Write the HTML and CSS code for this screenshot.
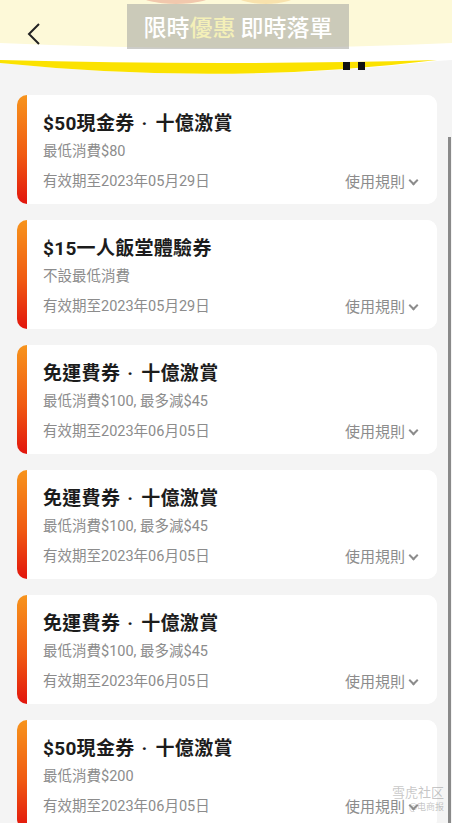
FILE: index.html
```html
<!DOCTYPE html>
<html lang="zh-Hant">
<head>
    <meta charset="UTF-8">
    <meta name="viewport" content="width=device-width, initial-scale=1.0">
    <title>限時優惠 即時落單</title>
    <link rel="stylesheet" href="styles.css">
</head>
<body>
    <div class="page">
        <header class="header">
            <div class="header-art">
                <span class="blob blob-red"></span>
                <span class="blob blob-orange"></span>
            </div>
            <svg class="header-wave" width="452" height="80" viewBox="0 0 452 80">
                <path d="M0 43 Q226 53 452 43 L452 80 L0 80 Z" fill="#ffffff"/>
                <path d="M0 63 Q226 86 437 61 L452 60 L452 80 L0 80 Z" fill="#f4f4f4"/>
                <path d="M0 60 Q226 66 437 60 Q226 86 0 63 Z" fill="#fbe200"/>
                <rect x="343" y="62" width="7" height="8" fill="#111"/>
                <rect x="358" y="62" width="7" height="8" fill="#111"/>
            </svg>
            <button class="back" aria-label="返回">
                <svg width="14" height="22" viewBox="0 0 14 22">
                    <path d="M12 1 L2 11 L12 21" fill="none" stroke="#222" stroke-width="2"/>
                </svg>
            </button>
            <div class="banner">限時<span class="hl">優惠</span> 即時落單</div>
        </header>

        <main class="list">
            <div class="coupon">
                <div class="coupon-body">
                    <div class="coupon-title">$50現金券<span class="dot">·</span>十億激賞</div>
                    <div class="coupon-sub">最低消費$80</div>
                    <div class="coupon-foot">
                        <span>有效期至2023年05月29日</span>
                        <span class="rules">使用規則 <i class="chev"></i></span>
                    </div>
                </div>
            </div>
            <div class="coupon">
                <div class="coupon-body">
                    <div class="coupon-title">$15一人飯堂體驗券</div>
                    <div class="coupon-sub">不設最低消費</div>
                    <div class="coupon-foot">
                        <span>有效期至2023年05月29日</span>
                        <span class="rules">使用規則 <i class="chev"></i></span>
                    </div>
                </div>
            </div>
            <div class="coupon">
                <div class="coupon-body">
                    <div class="coupon-title">免運費券<span class="dot">·</span>十億激賞</div>
                    <div class="coupon-sub">最低消費$100, 最多減$45</div>
                    <div class="coupon-foot">
                        <span>有效期至2023年06月05日</span>
                        <span class="rules">使用規則 <i class="chev"></i></span>
                    </div>
                </div>
            </div>
            <div class="coupon">
                <div class="coupon-body">
                    <div class="coupon-title">免運費券<span class="dot">·</span>十億激賞</div>
                    <div class="coupon-sub">最低消費$100, 最多減$45</div>
                    <div class="coupon-foot">
                        <span>有效期至2023年06月05日</span>
                        <span class="rules">使用規則 <i class="chev"></i></span>
                    </div>
                </div>
            </div>
            <div class="coupon">
                <div class="coupon-body">
                    <div class="coupon-title">免運費券<span class="dot">·</span>十億激賞</div>
                    <div class="coupon-sub">最低消費$100, 最多減$45</div>
                    <div class="coupon-foot">
                        <span>有效期至2023年06月05日</span>
                        <span class="rules">使用規則 <i class="chev"></i></span>
                    </div>
                </div>
            </div>
            <div class="coupon">
                <div class="coupon-body">
                    <div class="coupon-title">$50現金券<span class="dot">·</span>十億激賞</div>
                    <div class="coupon-sub">最低消費$200</div>
                    <div class="coupon-foot">
                        <span>有效期至2023年06月05日</span>
                        <span class="rules">使用規則 <i class="chev"></i></span>
                    </div>
                </div>
            </div>
        </main>

        <div class="scrollbar"></div>
        <div class="watermark">
            <span class="wm-main">雪虎社区</span>
            <span class="wm-sub">@电商报</span>
        </div>
    </div>
</body>
</html>
```

FILE: styles.css
```css
html, body {
    margin: 0;
    padding: 0;
}

body {
    font-family: Roboto, "Noto Sans CJK TC", sans-serif;
    background: #f4f4f4;
}

.page {
    position: relative;
    width: 452px;
    height: 823px;
    overflow: hidden;
    background: #f4f4f4;
}

/* header */
.header {
    position: relative;
    height: 75px;
    background: #fdf9d8;
}

.header-art {
    position: absolute;
    top: 0;
    left: 0;
    width: 100%;
    height: 10px;
    overflow: hidden;
}

.blob {
    position: absolute;
    top: -14px;
    height: 18px;
    border-radius: 50%;
    opacity: 0.55;
}

.blob-red {
    left: 140px;
    width: 72px;
    background: #e8a08a;
}

.blob-orange {
    left: 236px;
    width: 60px;
    background: #f4cf8a;
}

.header-wave {
    position: absolute;
    left: 0;
    top: 0;
    display: block;
}

.back {
    position: absolute;
    left: 27px;
    top: 23px;
    padding: 0;
    border: none;
    background: none;
    display: flex;
}

.banner {
    position: absolute;
    left: 127px;
    top: 4px;
    width: 222px;
    height: 45px;
    background: rgba(170, 170, 165, 0.6);
    color: #ffffff;
    font-family: "Noto Sans CJK TC", sans-serif;
    font-size: 23px;
    font-weight: 500;
    line-height: 45px;
    text-align: center;
}

.banner .hl {
    color: #f4f0b8;
}

/* coupons */
.list {
    display: flex;
    flex-direction: column;
    gap: 16px;
    padding: 20px 15px 0 17px;
}

.coupon {
    display: flex;
    height: 109px;
    flex-shrink: 0;
    border-radius: 10px;
    background-color: #ffffff;
    background-image: linear-gradient(180deg, #f7941d 0%, #f05a12 55%, #e2150d 100%);
    background-size: 14px 100%;
    background-repeat: no-repeat;
    overflow: hidden;
}

.coupon-body {
    flex: 1;
    margin-left: 10px;
    background: #ffffff;
    padding: 17px 20px 12px 16px;
}

.coupon-title {
    font-size: 19px;
    font-weight: 700;
    line-height: 24px;
    color: #1c1c1c;
    letter-spacing: 0.3px;
}

.coupon-title .dot {
    margin: 0 8px 0 7px;
}

.coupon-sub {
    margin-top: 6px;
    font-size: 14.5px;
    line-height: 20px;
    color: #8c8c8c;
}

.coupon-foot {
    margin-top: 10px;
    display: flex;
    justify-content: space-between;
    align-items: center;
    font-size: 14.5px;
    line-height: 20px;
    color: #8c8c8c;
}

.rules {
    display: flex;
    align-items: center;
    gap: 5px;
    font-size: 15px;
}

.chev {
    display: block;
    width: 5px;
    height: 5px;
    border-right: 2px solid #8c8c8c;
    border-bottom: 2px solid #8c8c8c;
    transform: translateY(-2px) rotate(45deg);
}

/* overlays */
.scrollbar {
    position: absolute;
    left: 448px;
    top: 137px;
    width: 3px;
    height: 700px;
    background: #8a8a8a;
}

.watermark {
    position: absolute;
    left: 378px;
    top: 786px;
    display: flex;
    flex-direction: column;
    align-items: flex-end;
    width: 66px;
    color: rgba(150, 150, 150, 0.55);
    line-height: 1;
}

.wm-main {
    font-size: 13px;
}

.wm-sub {
    margin-top: 4px;
    font-size: 9px;
}
```
